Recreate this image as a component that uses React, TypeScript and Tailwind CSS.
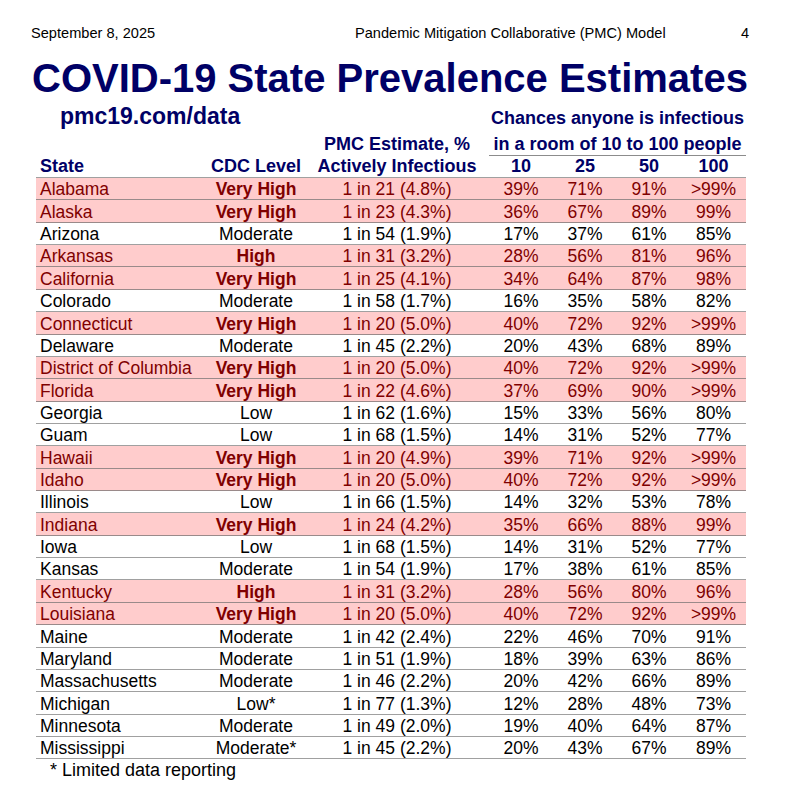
import React from 'react';

type Row = {
  state: string;
  level: string;
  est: string;
  p: [string, string, string, string];
  hot?: boolean;
};

// Rows as they appear on the slide; "hot" rows get the pink band
const rows: Row[] = [
  { state: "Alabama", level: "Very High", est: "1 in 21 (4.8%)", p: ["39%", "71%", "91%", ">99%"], hot: true },
  { state: "Alaska", level: "Very High", est: "1 in 23 (4.3%)", p: ["36%", "67%", "89%", "99%"], hot: true },
  { state: "Arizona", level: "Moderate", est: "1 in 54 (1.9%)", p: ["17%", "37%", "61%", "85%"] },
  { state: "Arkansas", level: "High", est: "1 in 31 (3.2%)", p: ["28%", "56%", "81%", "96%"], hot: true },
  { state: "California", level: "Very High", est: "1 in 25 (4.1%)", p: ["34%", "64%", "87%", "98%"], hot: true },
  { state: "Colorado", level: "Moderate", est: "1 in 58 (1.7%)", p: ["16%", "35%", "58%", "82%"] },
  { state: "Connecticut", level: "Very High", est: "1 in 20 (5.0%)", p: ["40%", "72%", "92%", ">99%"], hot: true },
  { state: "Delaware", level: "Moderate", est: "1 in 45 (2.2%)", p: ["20%", "43%", "68%", "89%"] },
  { state: "District of Columbia", level: "Very High", est: "1 in 20 (5.0%)", p: ["40%", "72%", "92%", ">99%"], hot: true },
  { state: "Florida", level: "Very High", est: "1 in 22 (4.6%)", p: ["37%", "69%", "90%", ">99%"], hot: true },
  { state: "Georgia", level: "Low", est: "1 in 62 (1.6%)", p: ["15%", "33%", "56%", "80%"] },
  { state: "Guam", level: "Low", est: "1 in 68 (1.5%)", p: ["14%", "31%", "52%", "77%"] },
  { state: "Hawaii", level: "Very High", est: "1 in 20 (4.9%)", p: ["39%", "71%", "92%", ">99%"], hot: true },
  { state: "Idaho", level: "Very High", est: "1 in 20 (5.0%)", p: ["40%", "72%", "92%", ">99%"], hot: true },
  { state: "Illinois", level: "Low", est: "1 in 66 (1.5%)", p: ["14%", "32%", "53%", "78%"] },
  { state: "Indiana", level: "Very High", est: "1 in 24 (4.2%)", p: ["35%", "66%", "88%", "99%"], hot: true },
  { state: "Iowa", level: "Low", est: "1 in 68 (1.5%)", p: ["14%", "31%", "52%", "77%"] },
  { state: "Kansas", level: "Moderate", est: "1 in 54 (1.9%)", p: ["17%", "38%", "61%", "85%"] },
  { state: "Kentucky", level: "High", est: "1 in 31 (3.2%)", p: ["28%", "56%", "80%", "96%"], hot: true },
  { state: "Louisiana", level: "Very High", est: "1 in 20 (5.0%)", p: ["40%", "72%", "92%", ">99%"], hot: true },
  { state: "Maine", level: "Moderate", est: "1 in 42 (2.4%)", p: ["22%", "46%", "70%", "91%"] },
  { state: "Maryland", level: "Moderate", est: "1 in 51 (1.9%)", p: ["18%", "39%", "63%", "86%"] },
  { state: "Massachusetts", level: "Moderate", est: "1 in 46 (2.2%)", p: ["20%", "42%", "66%", "89%"] },
  { state: "Michigan", level: "Low*", est: "1 in 77 (1.3%)", p: ["12%", "28%", "48%", "73%"] },
  { state: "Minnesota", level: "Moderate", est: "1 in 49 (2.0%)", p: ["19%", "40%", "64%", "87%"] },
  { state: "Mississippi", level: "Moderate*", est: "1 in 45 (2.2%)", p: ["20%", "43%", "67%", "89%"] },
];

const cols = "grid grid-cols-[171px_98px_184px_64px_64px_64px_65px]";

export default function App() {
  return (
    <div className="w-[786px] min-h-[800px] bg-white text-black font-['Liberation_Sans',Arial,sans-serif]">
      {/* slide header */}
      <div className="flex items-baseline pt-[25px] text-[14.6px] leading-[17px]">
        <div className="w-[355px] pl-[31px]">September 8, 2025</div>
        <div>Pandemic Mitigation Collaborative (PMC) Model</div>
        <div className="ml-auto pr-[37px]">4</div>
      </div>

      <h1 className="mt-[16px] pl-[32px] text-[40px] leading-[40px] font-bold text-[#000066]">
        COVID-19 State Prevalence Estimates
      </h1>

      <div className="ml-[36px] w-[710px] font-bold text-[#000066]">
        <div className={`${cols} mt-[6px] items-baseline`}>
          <div className="col-span-3 pl-[24px] text-[23px] leading-[24px]">pmc19.com/data</div>
          <div className="col-span-4 text-center text-[18px] leading-[24px]">Chances anyone is infectious</div>
        </div>

        <div className={`${cols} mt-[4px] text-[18px] leading-[21px]`}>
          <div className="col-span-2" />
          <div className="text-center">PMC Estimate, %</div>
          <div className="col-span-4 text-center border-b border-[#8c8c8c]">in a room of 10 to 100 people</div>
        </div>

        <div className={`${cols} text-[18px] leading-[21px] border-b border-[#a0a0a0]`}>
          <div className="pl-[4px]">State</div>
          <div className="text-center">CDC Level</div>
          <div className="text-center">Actively Infectious</div>
          <div className="text-center">10</div>
          <div className="text-center">25</div>
          <div className="text-center">50</div>
          <div className="text-center">100</div>
        </div>
      </div>

      <div className="ml-[36px] w-[710px] text-[17.5px]">
        {rows.map(r => (
          <div
            key={r.state}
            className={`${cols} h-[22.36px] items-end leading-[20px] border-b ${
              r.hot ? 'bg-[#ffcccc] text-[#800000] border-[#9a8a8a]' : 'bg-white text-black border-[#a0a0a0]'
            }`}
          >
            <div className="pl-[4px] whitespace-nowrap">{r.state}</div>
            <div className={`text-center whitespace-nowrap ${r.hot ? 'font-bold' : ''}`}>{r.level}</div>
            <div className="text-center whitespace-nowrap">{r.est}</div>
            {r.p.map((v, i) => (
              <div key={i} className="text-center">{v}</div>
            ))}
          </div>
        ))}
      </div>

      <p className="mt-[1px] pl-[50px] text-[18px] leading-[20px]">* Limited data reporting</p>
    </div>
  );
}
